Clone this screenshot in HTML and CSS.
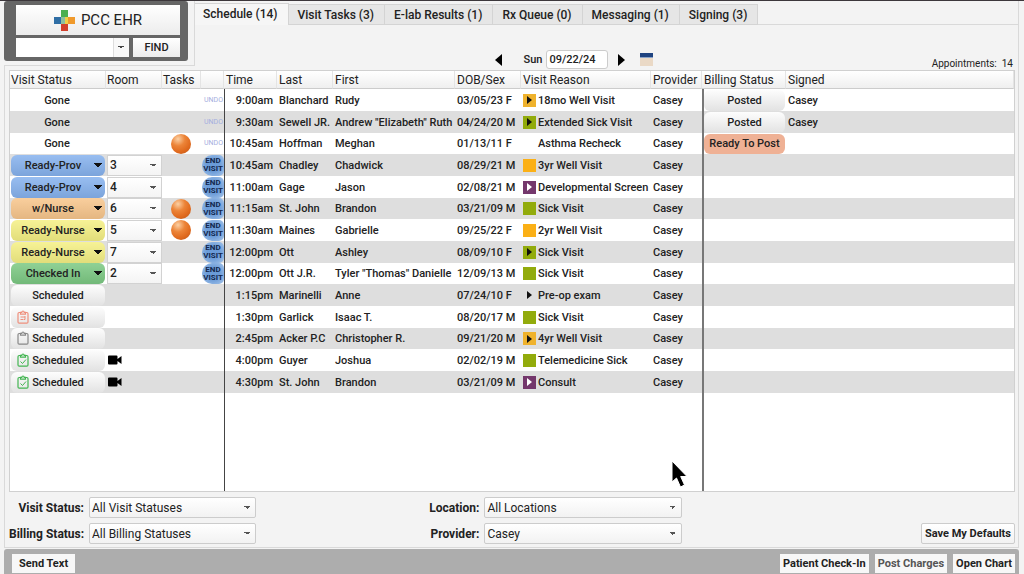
FILE: index.html
```
<!doctype html>
<html lang="en">
<head>
	<meta charset="utf-8">
	<meta name="viewport" content="width=device-width, initial-scale=1.0">
	<title>PCC EHR - Schedule</title>
	<link rel="stylesheet" href="styles.css">
</head>
<body>
	<!-- shared icons -->
	<svg class="defs" width="0" height="0" aria-hidden="true">
		<symbol id="i-clip" viewBox="0 0 12 14">
			<path d="M3.5 2.5H2.2Q1 2.5 1 3.7V12Q1 13.2 2.2 13.2H9.8Q11 13.2 11 12V3.7Q11 2.5 9.8 2.5H8.5M3.5 4.2V2.4H4.8Q5 1 6 1T7.2 2.4H8.5V4.2Z" fill="none" stroke="currentColor" stroke-width="1.2"/>
		</symbol>
		<symbol id="i-video" viewBox="0 0 14 10">
			<path d="M1 0.5H8.5Q9.5 0.5 9.5 1.5V4L13.5 1V9L9.5 6V8.5Q9.5 9.5 8.5 9.5H1Q0 9.5 0 8.5V1.5Q0 0.5 1 0.5Z"/>
		</symbol>
	</svg>

	<header class="top">
		<div class="brand-area">
			<div class="brand-box">
				<button class="brand">
					<svg width="21" height="21" viewBox="0 0 21 21">
						<path d="M7 0h7v7H7z" fill="#4caf50"/>
						<path d="M0 7h7v7H0z" fill="#2f6ea5"/>
						<path d="M7 7h4v7H7z" fill="#8cc0a0"/>
						<path d="M11 7h3v7h-3z" fill="#f0cf48"/>
						<path d="M14 7h7v7h-7z" fill="#f09a2c"/>
						<path d="M7 14h7v7H7z" fill="#d2402c"/>
					</svg>
					PCC EHR
				</button>
				<div class="find-row">
					<input class="find-input" type="text" aria-label="Find patient">
					<button class="find-drop" aria-label="Recent patients"></button>
					<button class="find-btn">FIND</button>
				</div>
			</div>
		</div>
		<div class="main-head">
			<nav class="tabs">
				<button class="tab active">Schedule (14)</button>
				<button class="tab">Visit Tasks (3)</button>
				<button class="tab">E-lab Results (1)</button>
				<button class="tab">Rx Queue (0)</button>
				<button class="tab">Messaging (1)</button>
				<button class="tab">Signing (3)</button>
			</nav>
			<div class="date-bar">
				<div class="date-nav">
					<button class="arrow" aria-label="Previous day"><svg width="7" height="12" viewBox="0 0 7 12"><path d="M7 0V12L0 6Z"/></svg></button>
					<label for="day">Sun</label>
					<input id="day" class="day" type="text" value="09/22/24">
					<button class="arrow" aria-label="Next day"><svg width="7" height="12" viewBox="0 0 7 12"><path d="M0 0V12L7 6Z"/></svg></button>
					<button class="arrow cal" aria-label="Calendar"><svg width="13" height="13" viewBox="0 0 13 13"><path d="M0 0h13v13H0z" fill="#ead9c6"/><path d="M0 0h13v4H0z" fill="#1f4380"/><path d="M0 4h13v1H0z" fill="#8ba4c8"/></svg></button>
				</div>
				<div class="count">Appointments: &nbsp;14</div>
			</div>
		</div>
	</header>

	<main class="panel">
		<div class="grid-wrap">
			<table class="schedule">
				<colgroup>
					<col class="c-status"><col class="c-room"><col class="c-tasks"><col class="c-act">
					<col class="c-time"><col class="c-last"><col class="c-first"><col class="c-dob">
					<col class="c-reason"><col class="c-prov"><col class="c-bill"><col>
				</colgroup>
				<thead>
					<tr>
						<th>Visit Status</th><th>Room</th><th>Tasks</th><th></th>
						<th>Time</th><th>Last</th><th>First</th><th>DOB/Sex</th>
						<th>Visit Reason</th><th>Provider</th><th>Billing Status</th><th>Signed</th>
					</tr>
				</thead>
				<tbody>
					<tr>
						<td class="mid">Gone</td><td></td><td></td><td><button class="undo">UNDO</button></td>
						<td class="time">9:00am</td><td>Blanchard</td><td>Rudy</td><td>03/05/23 F</td>
						<td><div class="reason"><i class="sq amber play"></i>18mo Well Visit</div></td><td>Casey</td><td class="bill"><button class="pill">Posted</button></td><td>Casey</td>
					</tr>
					<tr>
						<td class="mid">Gone</td><td></td><td></td><td><button class="undo">UNDO</button></td>
						<td class="time">9:30am</td><td>Sewell JR.</td><td>Andrew "Elizabeth" Ruth</td><td>04/24/20 M</td>
						<td><div class="reason"><i class="sq green play"></i>Extended Sick Visit</div></td><td>Casey</td><td class="bill"><button class="pill">Posted</button></td><td>Casey</td>
					</tr>
					<tr>
						<td class="mid">Gone</td><td></td><td><i class="ball"></i></td><td><button class="undo">UNDO</button></td>
						<td class="time">10:45am</td><td>Hoffman</td><td>Meghan</td><td>01/13/11 F</td>
						<td><div class="reason"><i class="sq"></i>Asthma Recheck</div></td><td>Casey</td><td class="bill"><button class="pill ready">Ready To Post</button></td><td></td>
					</tr>
					<tr>
						<td><select class="status blue" aria-label="Visit status"><option>Ready-Prov</option></select></td><td><select class="room" aria-label="Room"><option>3</option></select></td><td></td><td><button class="end">END<br>VISIT</button></td>
						<td class="time">10:45am</td><td>Chadley</td><td>Chadwick</td><td>08/29/21 M</td>
						<td><div class="reason"><i class="sq amber"></i>3yr Well Visit</div></td><td>Casey</td><td></td><td></td>
					</tr>
					<tr>
						<td><select class="status blue" aria-label="Visit status"><option>Ready-Prov</option></select></td><td><select class="room" aria-label="Room"><option>4</option></select></td><td></td><td><button class="end">END<br>VISIT</button></td>
						<td class="time">11:00am</td><td>Gage</td><td>Jason</td><td>02/08/21 M</td>
						<td><div class="reason"><i class="sq purple play"></i>Developmental Screen</div></td><td>Casey</td><td></td><td></td>
					</tr>
					<tr>
						<td><select class="status orange" aria-label="Visit status"><option>w/Nurse</option></select></td><td><select class="room" aria-label="Room"><option>6</option></select></td><td><i class="ball"></i></td><td><button class="end">END<br>VISIT</button></td>
						<td class="time">11:15am</td><td>St. John</td><td>Brandon</td><td>03/21/09 M</td>
						<td><div class="reason"><i class="sq green"></i>Sick Visit</div></td><td>Casey</td><td></td><td></td>
					</tr>
					<tr>
						<td><select class="status yellow" aria-label="Visit status"><option>Ready-Nurse</option></select></td><td><select class="room" aria-label="Room"><option>5</option></select></td><td><i class="ball"></i></td><td><button class="end">END<br>VISIT</button></td>
						<td class="time">11:30am</td><td>Maines</td><td>Gabrielle</td><td>09/25/22 F</td>
						<td><div class="reason"><i class="sq amber"></i>2yr Well Visit</div></td><td>Casey</td><td></td><td></td>
					</tr>
					<tr>
						<td><select class="status yellow" aria-label="Visit status"><option>Ready-Nurse</option></select></td><td><select class="room" aria-label="Room"><option>7</option></select></td><td></td><td><button class="end">END<br>VISIT</button></td>
						<td class="time">12:00pm</td><td>Ott</td><td>Ashley</td><td>08/09/10 F</td>
						<td><div class="reason"><i class="sq green play"></i>Sick Visit</div></td><td>Casey</td><td></td><td></td>
					</tr>
					<tr>
						<td><select class="status mint" aria-label="Visit status"><option>Checked In</option></select></td><td><select class="room" aria-label="Room"><option>2</option></select></td><td></td><td><button class="end">END<br>VISIT</button></td>
						<td class="time">12:00pm</td><td>Ott J.R.</td><td>Tyler "Thomas" Danielle</td><td>12/09/13 M</td>
						<td><div class="reason"><i class="sq green"></i>Sick Visit</div></td><td>Casey</td><td></td><td></td>
					</tr>
					<tr>
						<td><button class="pill sched">Scheduled</button></td><td></td><td></td><td></td>
						<td class="time">1:15pm</td><td>Marinelli</td><td>Anne</td><td>07/24/10 F</td>
						<td><div class="reason"><i class="sq play"></i>Pre-op exam</div></td><td>Casey</td><td></td><td></td>
					</tr>
					<tr>
						<td><button class="pill sched"><svg class="clip red" viewBox="0 0 12 14"><use href="#i-clip"/><path d="M3.5 7H8M3.5 9.5H6M8 6V9.5H6.5"/></svg>Scheduled</button></td><td></td><td></td><td></td>
						<td class="time">1:30pm</td><td>Garlick</td><td>Isaac T.</td><td>08/20/17 M</td>
						<td><div class="reason"><i class="sq green"></i>Sick Visit</div></td><td>Casey</td><td></td><td></td>
					</tr>
					<tr>
						<td><button class="pill sched"><svg class="clip" viewBox="0 0 12 14"><use href="#i-clip"/></svg>Scheduled</button></td><td></td><td></td><td></td>
						<td class="time">2:45pm</td><td>Acker P.C</td><td>Christopher R.</td><td>09/21/20 M</td>
						<td><div class="reason"><i class="sq amber play"></i>4yr Well Visit</div></td><td>Casey</td><td></td><td></td>
					</tr>
					<tr>
						<td><button class="pill sched"><svg class="clip ok" viewBox="0 0 12 14"><use href="#i-clip"/><path d="M3.5 8.5L5.5 10.5L9 6.5"/></svg>Scheduled</button></td><td><svg class="video" width="14" height="10"><use href="#i-video"/></svg></td><td></td><td></td>
						<td class="time">4:00pm</td><td>Guyer</td><td>Joshua</td><td>02/02/19 M</td>
						<td><div class="reason"><i class="sq green"></i>Telemedicine Sick</div></td><td>Casey</td><td></td><td></td>
					</tr>
					<tr>
						<td><button class="pill sched"><svg class="clip ok" viewBox="0 0 12 14"><use href="#i-clip"/><path d="M3.5 8.5L5.5 10.5L9 6.5"/></svg>Scheduled</button></td><td><svg class="video" width="14" height="10"><use href="#i-video"/></svg></td><td></td><td></td>
						<td class="time">4:30pm</td><td>St. John</td><td>Brandon</td><td>03/21/09 M</td>
						<td><div class="reason"><i class="sq purple play"></i>Consult</div></td><td>Casey</td><td></td><td></td>
					</tr>
					<!-- empty space under the last appointment -->
					<tr class="filler">
						<td></td><td></td><td></td><td></td><td></td><td></td><td></td><td></td><td></td><td></td><td></td><td></td>
					</tr>
				</tbody>
			</table>
		</div>

		<form class="filters">
			<label for="f-visit">Visit Status:</label>
			<select id="f-visit"><option>All Visit Statuses</option></select>
			<label for="f-loc">Location:</label>
			<select id="f-loc"><option>All Locations</option></select>
			<span></span>
			<label for="f-bill">Billing Status:</label>
			<select id="f-bill"><option>All Billing Statuses</option></select>
			<label for="f-prov">Provider:</label>
			<select id="f-prov"><option>Casey</option></select>
			<button type="button" class="save">Save My Defaults</button>
		</form>
	</main>

	<footer class="actions">
		<button>Send Text</button>
		<span class="space"></span>
		<button>Patient Check-In</button>
		<button class="dim">Post Charges</button>
		<button>Open Chart</button>
	</footer>

	<svg class="pointer" width="19" height="28" viewBox="0 0 19 28" aria-hidden="true">
		<path d="M1 1V22L5.5 18L9.5 27L13.5 25L9.7 16.5H16Z" stroke="#fff" stroke-width="1"/>
	</svg>
</body>
</html>
```

FILE: styles.css
```
* {
	box-sizing: border-box;
}
body {
	margin: 0;
	padding: 0 5px 0 4px;
	height: 100vh;
	display: flex;
	flex-direction: column;
	border-top: 1px solid #3c373b;
	background: #f3f3f3;
	color: #222;
	font-family: Roboto, sans-serif;
	font-size: 11px;
	font-weight: 500;
	overflow: hidden;
}
button, input, select {
	font: inherit;
	color: inherit;
	margin: 0;
	padding: 0;
	border: none;
	border-radius: 0;
	background: none;
}
select {
	appearance: none;
}
.defs {
	position: absolute;
}

/* Header */
.top {
	display: grid;
	grid-template-columns: 191px 1fr;
}
.brand-area {
	border-right: 1px solid #d9d9d9;
	border-bottom: 1px solid #d9d9d9;
	padding: 0 6px 4px 0;
}
.brand-box {
	background: #666;
	border-radius: 3px;
	padding: 4px 8px 4px 12px;
	display: flex;
	flex-direction: column;
	gap: 3px;
}
.brand {
	height: 30px;
	display: flex;
	align-items: center;
	justify-content: center;
	gap: 6px;
	background: linear-gradient(#fff, #ececec);
	font-size: 15px;
	font-weight: 400;
}
.find-row {
	display: flex;
	height: 19px;
}
.find-input {
	flex: 1;
	min-width: 0;
	background: #fff;
}
.find-drop {
	width: 16px;
	margin-right: 4px;
	border-left: 1px solid #ddd;
	background:
		linear-gradient(to bottom left, #444 50%, transparent 50%) 4px 8px / 3px 3px no-repeat,
		linear-gradient(to bottom right, #444 50%, transparent 50%) 7px 8px / 3px 3px no-repeat,
		#f8f8f8;
}
.find-btn {
	width: 47px;
	background: linear-gradient(#fff, #ececec);
}
/* the date row hangs a little into the panel below */
.main-head {
	display: flex;
	flex-direction: column;
	margin-bottom: -3px;
	border-right: 1px solid #d9d9d9;
}
.tabs {
	display: flex;
	align-items: flex-end;
	padding-top: 2px;
	box-shadow: inset 0 -1px #d9d9d9;
}
.tab {
	height: 21px;
	padding: 0 10px 0 9px;
	background: #e6e6e6;
	border: 1px solid #d4d4d4;
	border-left: none;
	font-size: 12px;
	white-space: nowrap;
}
.tab.active {
	height: 22px;
	padding: 0 10px 2px 8px;
	background: #f6f6f6;
	border-bottom: none;
}
.date-bar {
	flex: 1;
	display: grid;
	grid-template-columns: 5fr auto 6fr;
	align-items: end;
	padding-right: 5px;
}
.date-nav {
	grid-column: 2;
	display: flex;
	align-items: center;
}
.date-nav label {
	margin: 0 4px 0 22px;
}
.day {
	width: 62px;
	height: 19px;
	padding: 0 2px;
	margin-right: 10px;
	border: 1px solid #ccc;
	border-radius: 3px;
	background: #fff;
}
.arrow {
	display: flex;
}
.cal {
	margin-left: 15px;
}
.count {
	text-align: right;
	font-size: 10px;
	font-weight: 400;
}

/* Schedule table */
.panel {
	flex: 1;
	min-height: 0;
	display: flex;
	flex-direction: column;
	border: 1px solid #d9d9d9;
	border-top: none;
	padding: 4px 3px 3px 4px;
}
.grid-wrap {
	flex: 1;
	min-height: 0;
	border: 1px solid #d0d0d0;
	background: #fff;
}
.schedule {
	width: 100%;
	height: 100%;
	table-layout: fixed;
	border-collapse: separate;
	border-spacing: 0;
}
.c-status { width: 96px; }
.c-room { width: 56px; }
.c-tasks { width: 39px; }
.c-act { width: 23px; }
.c-time { width: 53px; }
.c-last { width: 56px; }
.c-first { width: 122px; }
.c-dob { width: 66px; }
.c-reason { width: 130px; }
.c-prov { width: 51px; }
.c-bill { width: 84px; }

th {
	height: 18px;
	padding: 0 0 0 1px;
	background: linear-gradient(#fff, #efefef);
	border-right: 1px solid #e4e4e4;
	border-bottom: 1px solid #ccc;
	font-size: 12px;
	font-weight: 400;
	text-align: left;
	white-space: nowrap;
}
th:nth-child(n+5) {
	padding-left: 2px;
}
td {
	height: 22px;
	padding: 0 0 0 2px;
	white-space: nowrap;
	line-height: 13px;
}
tbody tr:nth-child(3n) td {
	height: 21px;
}
tbody tr:nth-child(even) {
	background: #dedede;
}
tbody tr.filler, tbody tr.filler td {
	height: auto;
	background: #fff;
}
td:nth-child(1), td:nth-child(2), td:nth-child(4) {
	padding: 0 0 0 1px;
}
td:nth-child(5) {
	border-left: 1px solid #444;
}
td:nth-child(11) {
	border-left: 2px solid #777;
}
td.mid {
	padding-right: 3px;
	text-align: center;
}
td.time {
	text-align: right;
	padding-right: 4px;
}

.status, .room, .pill {
	display: block;
	height: 21px;
}
.status {
	width: 94px;
	padding-right: 10px;
	border-radius: 6px;
	text-align: center;
	text-align-last: center;
	background:
		linear-gradient(to bottom left, #111 50%, transparent 50%) 83px 8px / 4px 5px no-repeat,
		linear-gradient(to bottom right, #111 50%, transparent 50%) 87px 8px / 4px 5px no-repeat,
		linear-gradient(rgba(255,255,255,0.15), rgba(0,0,0,0.08));
}
.blue { background-color: #86b2ee; }
.orange { background-color: #f8c68c; }
.yellow { background-color: #f5f084; }
.mint { background-color: #7cc983; }

.room {
	width: 55px;
	padding-left: 2px;
	border: 1px solid #d2d2d2;
	background:
		linear-gradient(to bottom left, #555 50%, transparent 50%) right 8px center / 3px 3px no-repeat,
		linear-gradient(to bottom right, #555 50%, transparent 50%) right 5px center / 3px 3px no-repeat,
		linear-gradient(#fff, #f4f4f4);
	font-size: 12px;
}
.pill {
	width: 81px;
	border-radius: 6px;
	background: linear-gradient(#fdfdfd, #e2e2e2);
}
.pill.ready {
	height: 20px;
	background: #efb195;
}
.pill.sched {
	position: relative;
	width: 94px;
}
.bill {
	padding: 0;
}
.clip {
	position: absolute;
	left: 6px;
	top: 3px;
	width: 12px;
	height: 14px;
	color: #888;
	fill: none;
	stroke: currentColor;
}
.clip.red { color: #ee8f7c; }
.clip.ok { color: #43b552; }
.video {
	display: block;
	margin-left: 1px;
}
.undo {
	display: block;
	margin-left: 2px;
	color: #a3aede;
	font-size: 7px;
	font-weight: 400;
}
.end {
	display: block;
	width: 22px;
	height: 21px;
	border-radius: 10px 5px 5px 10px;
	background: radial-gradient(#6a9bd8 40%, #a8c6ea);
	color: #14284e;
	font-size: 8px;
	line-height: 8px;
	font-weight: 700;
}
.ball {
	display: block;
	width: 20px;
	height: 20px;
	margin-left: 7px;
	border-radius: 50%;
	background: radial-gradient(circle at 35% 25%, #fbd0a4, #ec8438 35%, #e06a1e 65%, #b9551a);
}

.reason {
	display: flex;
	align-items: center;
	gap: 2px;
}
.sq {
	width: 13px;
	height: 13px;
	display: flex;
	align-items: center;
	justify-content: center;
}
.amber { background: #fbb016; }
.green { background: #92ab0c; }
.purple { background: #74376c; }
.amber.play { background: #efb22c; }
.play::after {
	content: "";
	border-left: 5px solid #111;
	border-top: 4px solid transparent;
	border-bottom: 4px solid transparent;
}
.purple.play::after {
	border-left-color: #fff;
}

/* Filters */
.filters {
	display: grid;
	grid-template-columns: 75px 167px 2fr 198px 3fr;
	gap: 5px;
	align-items: center;
	padding-top: 5px;
}
.filters label {
	text-align: right;
	font-weight: 700;
	font-size: 12px;
	white-space: nowrap;
}
.filters select {
	height: 21px;
	padding-left: 2px;
	border: 1px solid #ccc;
	border-radius: 2px;
	background:
		linear-gradient(to bottom left, #555 50%, transparent 50%) right 8px center / 3px 3px no-repeat,
		linear-gradient(to bottom right, #555 50%, transparent 50%) right 5px center / 3px 3px no-repeat,
		linear-gradient(#fff, #f2f2f2);
	font-size: 12px;
	font-weight: 400;
}
.save {
	justify-self: end;
	height: 21px;
	padding: 0 3px;
	border: 1px solid #ccc;
	border-radius: 2px;
	background: linear-gradient(#fff, #f2f2f2);
	font-weight: 700;
	white-space: nowrap;
}

.actions {
	display: flex;
	gap: 6px;
	margin-top: 1px;
	padding: 5px 4px 1px 8px;
	border-radius: 3px 3px 0 0;
	background: #adadad;
}
.actions button {
	height: 19px;
	padding: 0 3px;
	background: #f7f7f7;
	font-weight: 700;
	white-space: nowrap;
}
.actions button:first-child {
	padding: 0 7px;
}
.actions .dim {
	color: #555;
}
.space {
	flex: 1;
}

/* Mouse pointer, over everything */
.pointer {
	position: absolute;
	left: 671px;
	top: 460px;
}
```
